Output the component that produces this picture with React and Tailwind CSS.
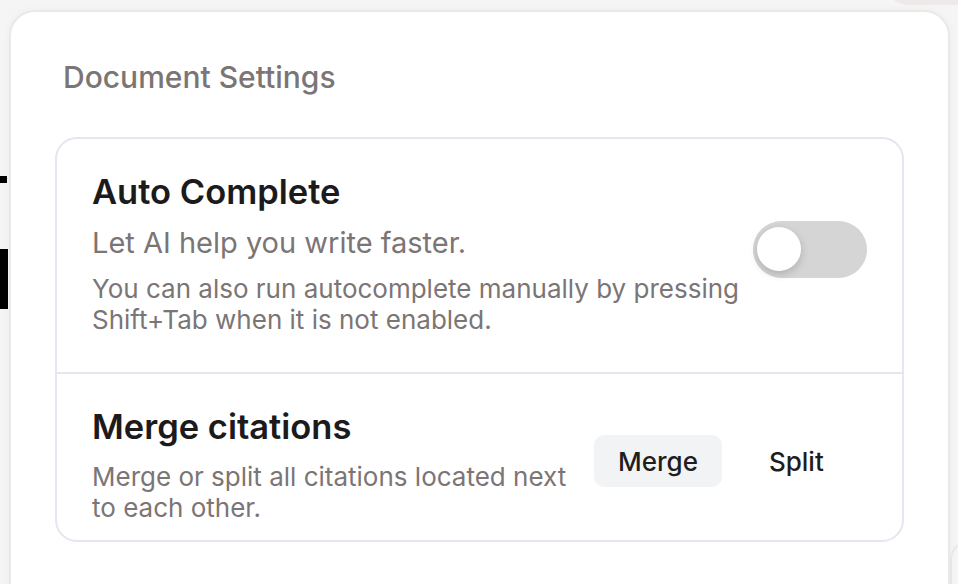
import { useState } from "react";

function Toggle({ on, onChange }) {
  return (
    <button
      type="button"
      onClick={() => onChange(!on)}
      className={`relative h-[57px] w-[114px] shrink-0 rounded-full transition-colors ${
        on ? "bg-[#1f1d1d]" : "bg-[#d5d5d5]"
      }`}
    >
      <span
        className={`absolute top-[6.5px] h-[44px] w-[44px] rounded-full bg-white shadow-[0_3px_8px_rgba(0,0,0,0.18)] transition-all ${
          on ? "left-[66px]" : "left-[4px]"
        }`}
      />
    </button>
  );
}

function App() {
  const [autoComplete, setAutoComplete] = useState(false);
  const [citations, setCitations] = useState("merge");

  return (
    <div
      className="relative h-[584px] w-[958px] overflow-hidden bg-[#f6f5f5]"
      style={{ fontFamily: "Inter, 'Noto Sans', sans-serif" }}
    >
      {/* bits of the page behind the panel */}
      <div className="absolute left-0 top-[176px] h-[7px] w-[7px] bg-black" />
      <div className="absolute left-0 top-[249px] h-[60px] w-[8px] bg-black" />
      <div className="absolute right-0 top-[-20px] h-[25px] w-[72px] rounded-bl-[22px] bg-[#ece9e8]" />
      <div className="absolute right-[-20px] top-[540px] h-[80px] w-[28px] rounded-tl-[20px] border-l-2 border-t-2 border-[#ebe8e8] bg-[#f6f5f5]" />

      <div className="relative ml-[9px] mt-[10px] h-[620px] w-[941px] rounded-[26px] border-2 border-[#ebe8e8] bg-white px-[44px] pt-[47px] shadow-[0_0_8px_rgba(0,0,0,0.04)]">
        <h2 className="pl-[8px] text-[30px] font-medium leading-[36px] text-[#7b7575]">
          Document Settings
        </h2>

        <div className="mt-[42px] rounded-[22px] border-2 border-[#e4e6f0]">
          <div className="flex items-center px-[35px] pb-[37px] pt-[33px]">
            <div className="w-[660px]">
              <div className="text-[34.5px] font-semibold leading-[40px] text-[#1c1a1a]">
                Auto Complete
              </div>
              <div className="mt-[13px] text-[29px] leading-[36px] text-[#7b7575]">
                Let AI help you write faster.
              </div>
              <div className="mt-[12px] text-[26px] leading-[31px] text-[#7b7575]">
                You can also run autocomplete manually by pressing Shift+Tab when it
                is not enabled.
              </div>
            </div>
            <div className="mb-[3px] ml-auto">
              <Toggle on={autoComplete} onChange={setAutoComplete} />
            </div>
          </div>

          <div className="flex items-center border-t-2 border-[#e4e6f0] px-[35px] pb-[17px] pt-[33px]">
            <div className="w-[480px]">
              <div className="text-[34.5px] font-semibold leading-[40px] text-[#1c1a1a]">
                Merge citations
              </div>
              <div className="mt-[14px] text-[26px] leading-[31px] text-[#7b7575]">
                Merge or split all citations located next to each other.
              </div>
            </div>
            <div className="mb-[8px] ml-[22px] flex gap-[23px]">
              <button
                type="button"
                onClick={() => setCitations("merge")}
                className={`h-[52px] rounded-[10px] px-[24px] text-[26px] font-medium text-[#1f1d1d] ${
                  citations === "merge" ? "bg-[#f2f3f5]" : ""
                }`}
              >
                Merge
              </button>
              <button
                type="button"
                onClick={() => setCitations("split")}
                className={`h-[52px] rounded-[10px] px-[24px] text-[26px] font-medium text-[#1f1d1d] ${
                  citations === "split" ? "bg-[#f2f3f5]" : ""
                }`}
              >
                Split
              </button>
            </div>
          </div>
        </div>
      </div>
    </div>
  );
}

export default App;
